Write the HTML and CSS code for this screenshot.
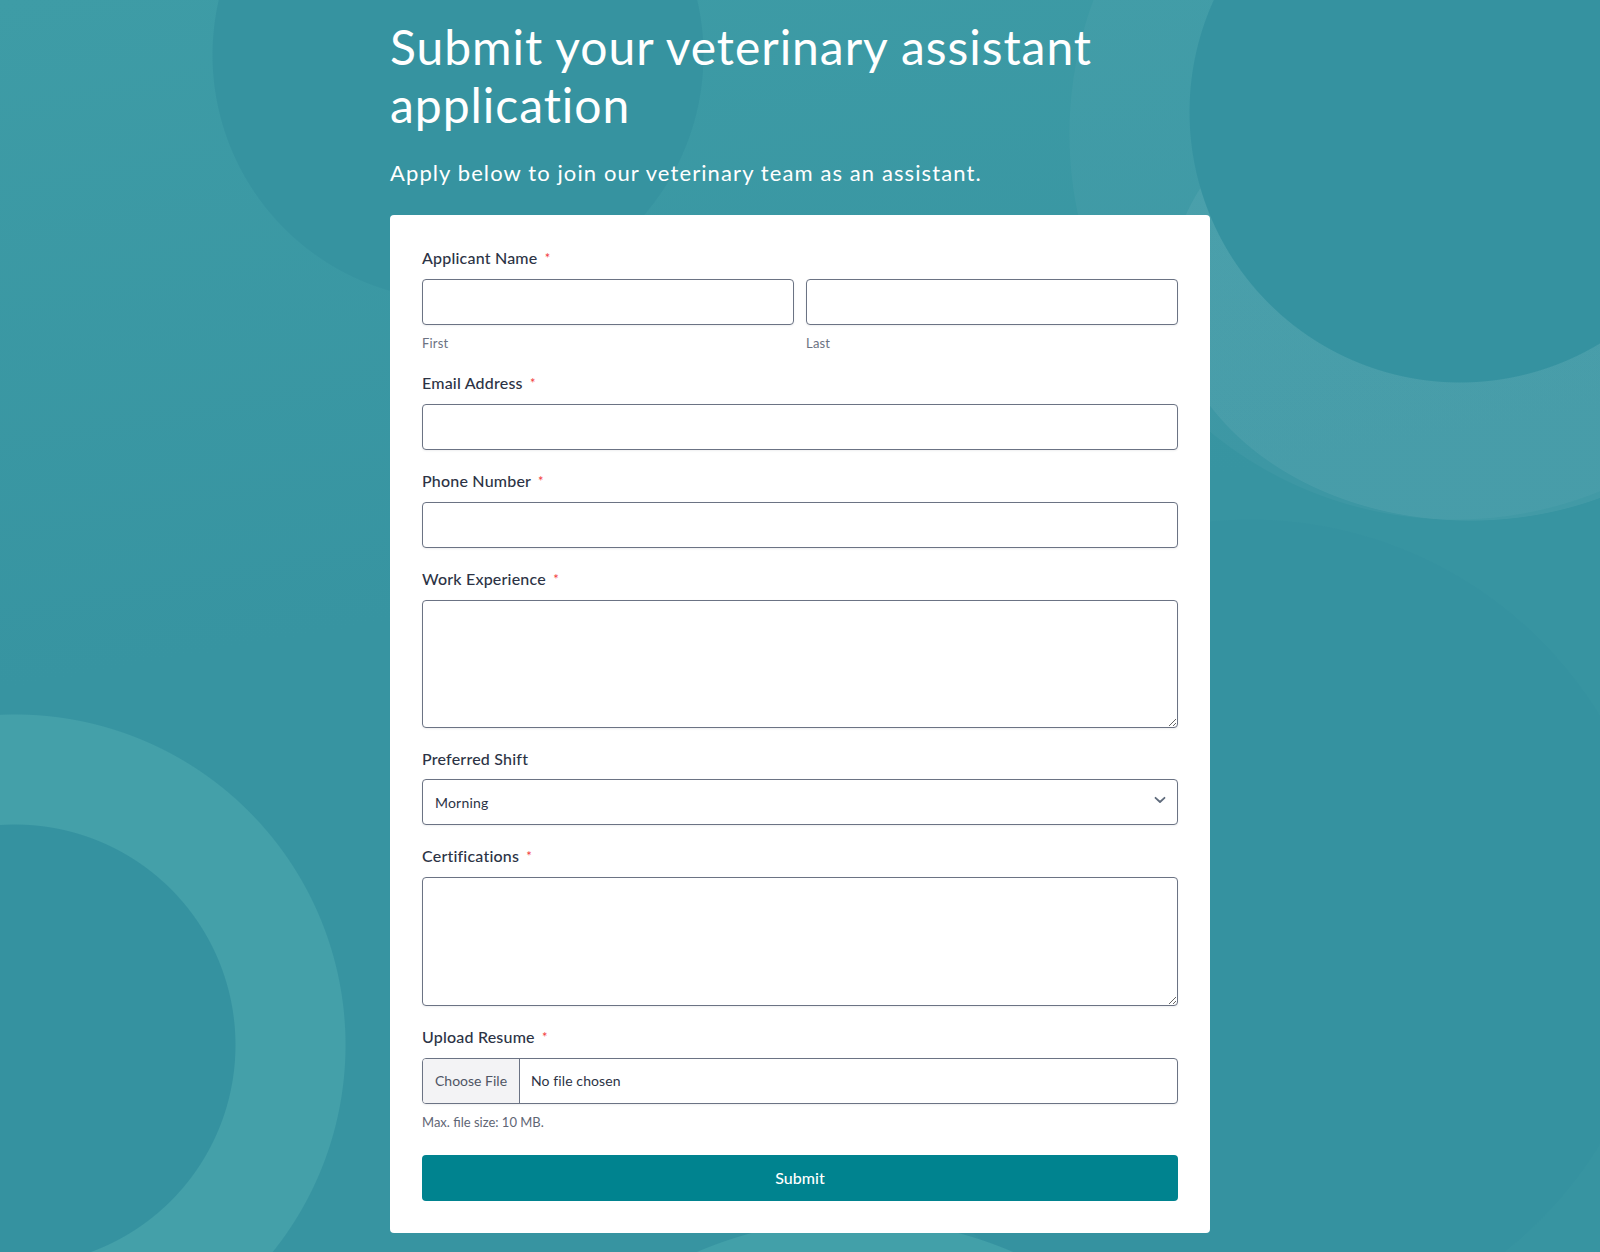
FILE: index.html
```html
<!DOCTYPE html>
<html lang="en">
<head>
<meta charset="utf-8">
<title>Veterinary Assistant Application</title>
<link rel="stylesheet" href="styles.css">
</head>
<body>
<div class="page">
  <header class="hero">
    <h1 class="title">Submit your veterinary assistant application</h1>
    <p class="subtitle">Apply below to join our veterinary team as an assistant.</p>
  </header>

  <form class="card">
    <div class="field">
      <div class="label">Applicant Name <span class="req">*</span></div>
      <div class="name-row">
        <div class="name-col">
          <input class="input" type="text">
          <span class="sublabel">First</span>
        </div>
        <div class="name-col">
          <input class="input" type="text">
          <span class="sublabel">Last</span>
        </div>
      </div>
    </div>

    <div class="field">
      <div class="label">Email Address <span class="req">*</span></div>
      <input class="input" type="email">
    </div>

    <div class="field">
      <div class="label">Phone Number <span class="req">*</span></div>
      <input class="input" type="tel">
    </div>

    <div class="field">
      <div class="label">Work Experience <span class="req">*</span></div>
      <textarea class="textarea"></textarea>
    </div>

    <div class="field">
      <div class="label">Preferred Shift</div>
      <div class="select-wrap">
        <select class="select">
          <option>Morning</option>
          <option>Afternoon</option>
          <option>Evening</option>
          <option>Night</option>
        </select>
        <svg class="chevron" width="12" height="8" viewBox="0 0 12 8" aria-hidden="true">
          <path d="M1.5 1.8 L6 6 L10.5 1.8" fill="none" stroke="#5f6b7c" stroke-width="1.8" stroke-linecap="round" stroke-linejoin="round"/>
        </svg>
      </div>
    </div>

    <div class="field">
      <div class="label">Certifications <span class="req">*</span></div>
      <textarea class="textarea"></textarea>
    </div>

    <div class="field">
      <div class="label">Upload Resume <span class="req">*</span></div>
      <div class="file">
        <span class="file-btn">Choose File</span>
        <span class="file-name">No file chosen</span>
      </div>
      <span class="hint">Max. file size: 10 MB.</span>
    </div>

    <button class="submit" type="button">Submit</button>
  </form>
</div>
</body>
</html>
```

FILE: styles.css
```css
html, body {
  margin: 0;
  padding: 0;
}

body {
  min-height: 1252px;
  font-family: "Lato", "Open Sans", "Liberation Sans", sans-serif;
  background-color: #3794a1;
  background-image:
    radial-gradient(circle 221px at 15px 1045px, #3592a0 220px, transparent 221px),
    radial-gradient(circle 331px at 15px 1045px, #44a0a9 330px, transparent 331px),
    radial-gradient(circle 246px at 458px 55px, #3693a0 245px, transparent 246px),
    radial-gradient(circle 271px at 1460px 112px, #3592a0 270px, transparent 271px),
    radial-gradient(ellipse 301px 231px at 1470px 290px, rgba(255,255,255,0.055) 300px, transparent 301px),
    radial-gradient(circle 386px at 1455px 134px, rgba(255,255,255,0.03) 385px, transparent 386px),
    radial-gradient(circle 401px at 855px 1620px, #42a0a9 400px, transparent 401px),
    radial-gradient(circle 411px at 1250px 930px, #3592a0 410px, transparent 411px),
    linear-gradient(170deg, #3e9ca6 0, #3794a1 45%, #3794a1 100%);
  background-repeat: no-repeat;
}

.page {
  width: 820px;
  margin: 0 auto;
  padding-top: 18.4px;
}

.hero {
  color: #ffffff;
}

.title {
  margin: 0;
  font-size: 48px;
  line-height: 57.6px;
  font-weight: 400;
  letter-spacing: 0.96px;
}

.subtitle {
  margin: 23.6px 0 0;
  font-size: 22px;
  line-height: 32px;
  font-weight: 400;
  letter-spacing: 1.1px;
}

.card {
  margin-top: 25.8px;
  background: #ffffff;
  border-radius: 4px;
  padding: 33px 32px 32px;
  display: flex;
  flex-direction: column;
  gap: 21px;
}

.field {
  display: flex;
  flex-direction: column;
}

.label {
  font-size: 16px;
  line-height: 20px;
  font-weight: 500;
  letter-spacing: 0.2px;
  color: #2c3345;
  margin-bottom: 10px;
}

.req {
  color: #f23a3c;
  font-size: 13px;
  font-weight: 400;
  margin-left: 3px;
  position: relative;
  top: -1px;
}

.name-row {
  display: grid;
  grid-template-columns: 1fr 1fr;
  gap: 12px;
}

.name-col {
  display: flex;
  flex-direction: column;
}

.input,
.textarea,
.select,
.file {
  box-sizing: border-box;
  width: 100%;
  border: 1px solid #6b7384;
  border-radius: 4px;
  background: #ffffff;
  font-family: inherit;
  font-size: 14px;
  color: #2c3345;
  box-shadow: 0 1px 2px rgba(43, 52, 69, 0.08);
  margin: 0;
}

.input {
  height: 46px;
  padding: 0 12px;
}

.sublabel {
  margin-top: 10px;
  margin-bottom: 1px;
  font-size: 13px;
  line-height: 16px;
  letter-spacing: 0.2px;
  color: #6b7282;
}

.textarea {
  height: 128.5px;
  padding: 10px 12px;
  resize: vertical;
  display: block;
}

.select-wrap {
  position: relative;
}

.select {
  height: 46px;
  padding: 0 40px 0 12px;
  appearance: none;
  -webkit-appearance: none;
  display: block;
  letter-spacing: 0.2px;
}

.chevron {
  position: absolute;
  right: 12px;
  top: 17px;
  pointer-events: none;
}

.file {
  height: 46px;
  display: flex;
  align-items: stretch;
  overflow: hidden;
}

.file-btn {
  display: flex;
  align-items: center;
  padding: 0 12px;
  background: #f3f3f5;
  border-right: 1px solid #6b7384;
  color: #4f5564;
  font-size: 14px;
}

.file-name {
  display: flex;
  align-items: center;
  padding-left: 11px;
  color: #2c3345;
  font-size: 14px;
  letter-spacing: 0.1px;
}

.hint {
  margin-top: 10px;
  font-size: 13px;
  line-height: 16px;
  color: #5f6675;
}

.submit {
  margin-top: 4px;
  height: 46px;
  width: 100%;
  border: none;
  border-radius: 4px;
  background: #00838f;
  color: #ffffff;
  font-family: inherit;
  font-size: 16px;
  font-weight: 500;
  cursor: pointer;
}
```
